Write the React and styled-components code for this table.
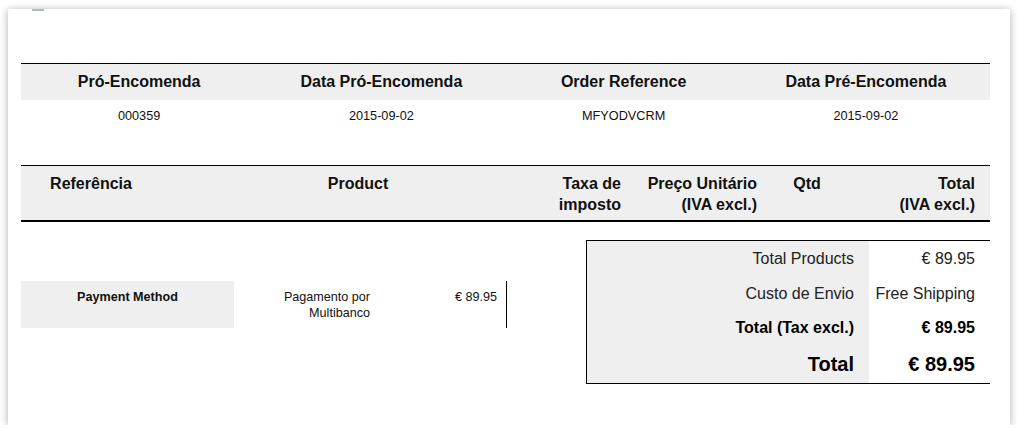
import React from 'react'
import styled, { createGlobalStyle } from 'styled-components'

const Global = createGlobalStyle`
  html, body {
    margin: 0;
    padding: 0;
    background: #fff;
  }
  body {
    font-family: "Liberation Sans", Arial, sans-serif;
    color: #111;
  }
`

const Sheet = styled.div`
  position: relative;
  margin: 9px 0 0 8px;
  width: 1002px;
  height: 416px;
  box-sizing: border-box;
  padding: 54px 20px 0 13px;
  background: #fff;
  box-shadow: 0 1px 8px rgba(0, 0, 0, 0.32);
`

const Tab = styled.div`
  position: absolute;
  top: 0;
  left: 24px;
  width: 12px;
  height: 2px;
  background: #a9bcc8;
`

const InfoTable = styled.div`
  border-top: 1px solid #000;
`

const InfoRow = styled.div`
  display: grid;
  grid-template-columns: repeat(4, 1fr);
  height: ${p => p.$h}px;
  align-items: center;
  background: ${p => (p.$head ? '#efefef' : 'transparent')};
`

const InfoCell = styled.div`
  text-align: center;
  padding-right: 6px;
  font-size: ${p => (p.$head ? 16 : 12.7)}px;
  font-weight: ${p => (p.$head ? 700 : 400)};
`

const ProductHead = styled.div`
  margin-top: 34px;
  display: grid;
  grid-template-columns: 140px 394px 73px 137px 84px 1fr;
  height: 57px;
  background: #efefef;
  border-top: 1px solid #000;
  border-bottom: 2px solid #000;
  font-size: 16px;
  font-weight: 700;
  line-height: 21px;
  padding-top: 7px;
  box-sizing: border-box;
`

const HeadCell = styled.div`
  text-align: ${p => p.$align || 'center'};
  padding-right: ${p => p.$pr || 0}px;
  white-space: nowrap;
`

const Body = styled.div`
  display: flex;
  align-items: flex-start;
  justify-content: space-between;
`

const PaymentRow = styled.div`
  margin-top: 59px;
  display: flex;
  height: 47px;
  font-size: 12.6px;
  line-height: 16px;
`

const PayLabel = styled.div`
  width: 213px;
  background: #efefef;
  text-align: center;
  font-weight: 700;
  padding-top: 8px;
  box-sizing: border-box;
`

const PayName = styled.div`
  width: 136px;
  text-align: right;
  padding-top: 8px;
`

const PayAmount = styled.div`
  width: 127px;
  text-align: right;
  padding-top: 8px;
`

const Divider = styled.div`
  width: 1px;
  margin-left: 9px;
  background: #000;
`

const Totals = styled.div`
  margin-top: 18px;
  width: 404px;
  border: 1px solid #000;
  border-right: none;
  box-sizing: border-box;
  display: grid;
  grid-template-columns: 282px 1fr;
`

const TLabel = styled.div`
  background: #efefef;
  text-align: right;
  padding-right: 15px;
  height: ${p => p.$h}px;
  line-height: ${p => p.$h}px;
  font-size: ${p => (p.$big ? 20 : 16)}px;
  font-weight: ${p => (p.$bold ? 700 : 400)};
  color: ${p => (p.$bold ? '#000' : '#222')};
  white-space: nowrap;
`

const TValue = styled(TLabel)`
  background: #fff;
  padding-right: 15px;
`

const infoHead = ['Pró-Encomenda', 'Data Pró-Encomenda', 'Order Reference', 'Data Pré-Encomenda']
const infoVals = ['000359', '2015-09-02', 'MFYODVCRM', '2015-09-02']

const totals = [
  { label: 'Total Products', value: '€ 89.95', h: 35 },
  { label: 'Custo de Envio', value: 'Free Shipping', h: 35 },
  { label: 'Total (Tax excl.)', value: '€ 89.95', h: 34, bold: true },
  { label: 'Total', value: '€ 89.95', h: 38, bold: true, big: true },
]

export default function App() {
  return (
    <>
      <Global />
      <Sheet>
        <Tab />
        <InfoTable>
          <InfoRow $head $h={36}>
            {infoHead.map(t => <InfoCell key={t} $head>{t}</InfoCell>)}
          </InfoRow>
          <InfoRow $h={31}>
            {infoVals.map((t, i) => <InfoCell key={i}>{t}</InfoCell>)}
          </InfoRow>
        </InfoTable>

        <ProductHead>
          <HeadCell>Referência</HeadCell>
          <HeadCell>Product</HeadCell>
          <HeadCell $align="right" $pr={7}>Taxa de<br />imposto</HeadCell>
          <HeadCell $align="right" $pr={8}>Preço Unitário<br />(IVA excl.)</HeadCell>
          <HeadCell>Qtd</HeadCell>
          <HeadCell $align="right" $pr={15}>Total<br />(IVA excl.)</HeadCell>
        </ProductHead>

        <Body>
          <PaymentRow>
            <PayLabel>Payment Method</PayLabel>
            <PayName>Pagamento por<br />Multibanco</PayName>
            <PayAmount>€ 89.95</PayAmount>
            <Divider />
          </PaymentRow>

          <Totals>
            {totals.map(r => (
              <React.Fragment key={r.label}>
                <TLabel $h={r.h} $bold={r.bold} $big={r.big}>{r.label}</TLabel>
                <TValue $h={r.h} $bold={r.bold} $big={r.big}>{r.value}</TValue>
              </React.Fragment>
            ))}
          </Totals>
        </Body>
      </Sheet>
    </>
  )
}
